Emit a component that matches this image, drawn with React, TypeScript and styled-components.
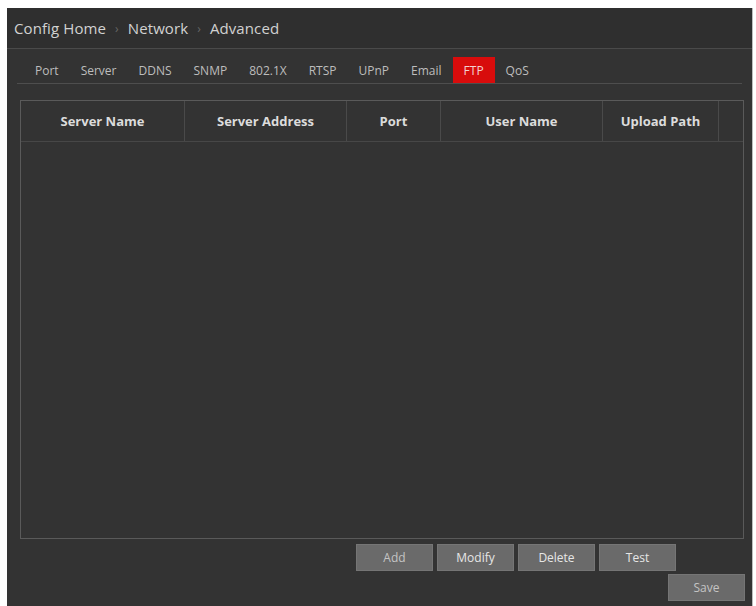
import styled, { createGlobalStyle } from "styled-components";

const GlobalStyle = createGlobalStyle`
  html, body {
    margin: 0;
    padding: 0;
    background: #fff;
    font-family: "Open Sans", "Noto Sans", sans-serif;
  }
`;

const Page = styled.div`
  width: 756px;
  height: 606px;
  padding: 8px 4px 0 7px;
  box-sizing: border-box;
  overflow: hidden;
`;

const Panel = styled.div`
  height: 100%;
  background-color: #333333;
  display: flex;
  flex-direction: column;
  box-shadow: 1px 0 0 #bdbdbd;
`;

const TitleBar = styled.div`
  height: 40px;
  display: flex;
  align-items: center;
  gap: 9px;
  padding-left: 7px;
  background-color: #2f2f2f;
  border-bottom: 1px solid #4a4a4a;
  color: #d2d2d2;
  font-size: 15px;
  letter-spacing: 0.1px;
`;

const Crumb = styled.span``;

const Sep = styled.span`
  color: #666;
  font-size: 12px;
`;

const Tabs = styled.div`
  display: flex;
  margin: 8px 10px 0 10px;
  padding-left: 7px;
  height: 26px;
  border-bottom: 1px solid #4e4e4e;
`;

const Tab = styled.div<{ $active?: boolean }>`
  display: flex;
  align-items: center;
  padding: 0 11px;
  font-size: 12px;
  color: ${(p) => (p.$active ? "#f4d0d0" : "#bdbdbd")};
  background-color: ${(p) => (p.$active ? "#d80c0c" : "transparent")};
`;

const Table = styled.div`
  margin: 16px 8px 0 13px;
  height: 437px;
  border: 1px solid #5a5a5a;
  display: flex;
  flex-direction: column;
`;

const HeaderRow = styled.div`
  display: grid;
  grid-template-columns: 164px 162px 94px 162px 116px 1fr;
  height: 40px;
  border-bottom: 1px solid #474747;
`;

const HeadCell = styled.div`
  display: flex;
  align-items: center;
  justify-content: center;
  border-right: 1px solid #4a4a4a;
  color: #dcdcdc;
  font-size: 13px;
  font-weight: 700;
  &:last-child {
    border-right: none;
  }
`;

const Body = styled.div`
  flex: 1;
`;

const ButtonRow = styled.div<{ $right: number; $top: number }>`
  display: flex;
  justify-content: flex-end;
  gap: 4px;
  margin-top: ${(p) => p.$top}px;
  padding-right: ${(p) => p.$right}px;
`;

const Button = styled.button<{ $dim?: boolean }>`
  width: 77px;
  height: 27px;
  border: 1px solid #757575;
  background-color: #6a6a6a;
  color: ${(p) => (p.$dim ? "#c4c4c4" : "#e6e6e6")};
  font-family: "Open Sans", "Noto Sans", sans-serif;
  font-size: 12px;
  padding: 0;
  cursor: pointer;
`;

const tabs = ["Port", "Server", "DDNS", "SNMP", "802.1X", "RTSP", "UPnP", "Email", "FTP", "QoS"];
const columns = ["Server Name", "Server Address", "Port", "User Name", "Upload Path", ""];

export default function App() {
  return (
    <>
      <GlobalStyle />
      <Page>
        <Panel>
          <TitleBar>
            <Crumb>Config Home</Crumb>
            <Sep>›</Sep>
            <Crumb>Network</Crumb>
            <Sep>›</Sep>
            <Crumb>Advanced</Crumb>
          </TitleBar>
          <Tabs>
            {tabs.map((t) => (
              <Tab key={t} $active={t === "FTP"}>
                {t}
              </Tab>
            ))}
          </Tabs>
          <Table>
            <HeaderRow>
              {columns.map((c, i) => (
                <HeadCell key={i}>{c}</HeadCell>
              ))}
            </HeaderRow>
            <Body />
          </Table>
          <ButtonRow $right={76} $top={5}>
            <Button $dim>Add</Button>
            <Button>Modify</Button>
            <Button>Delete</Button>
            <Button>Test</Button>
          </ButtonRow>
          <ButtonRow $right={7} $top={3}>
            <Button $dim>Save</Button>
          </ButtonRow>
        </Panel>
      </Page>
    </>
  );
}
